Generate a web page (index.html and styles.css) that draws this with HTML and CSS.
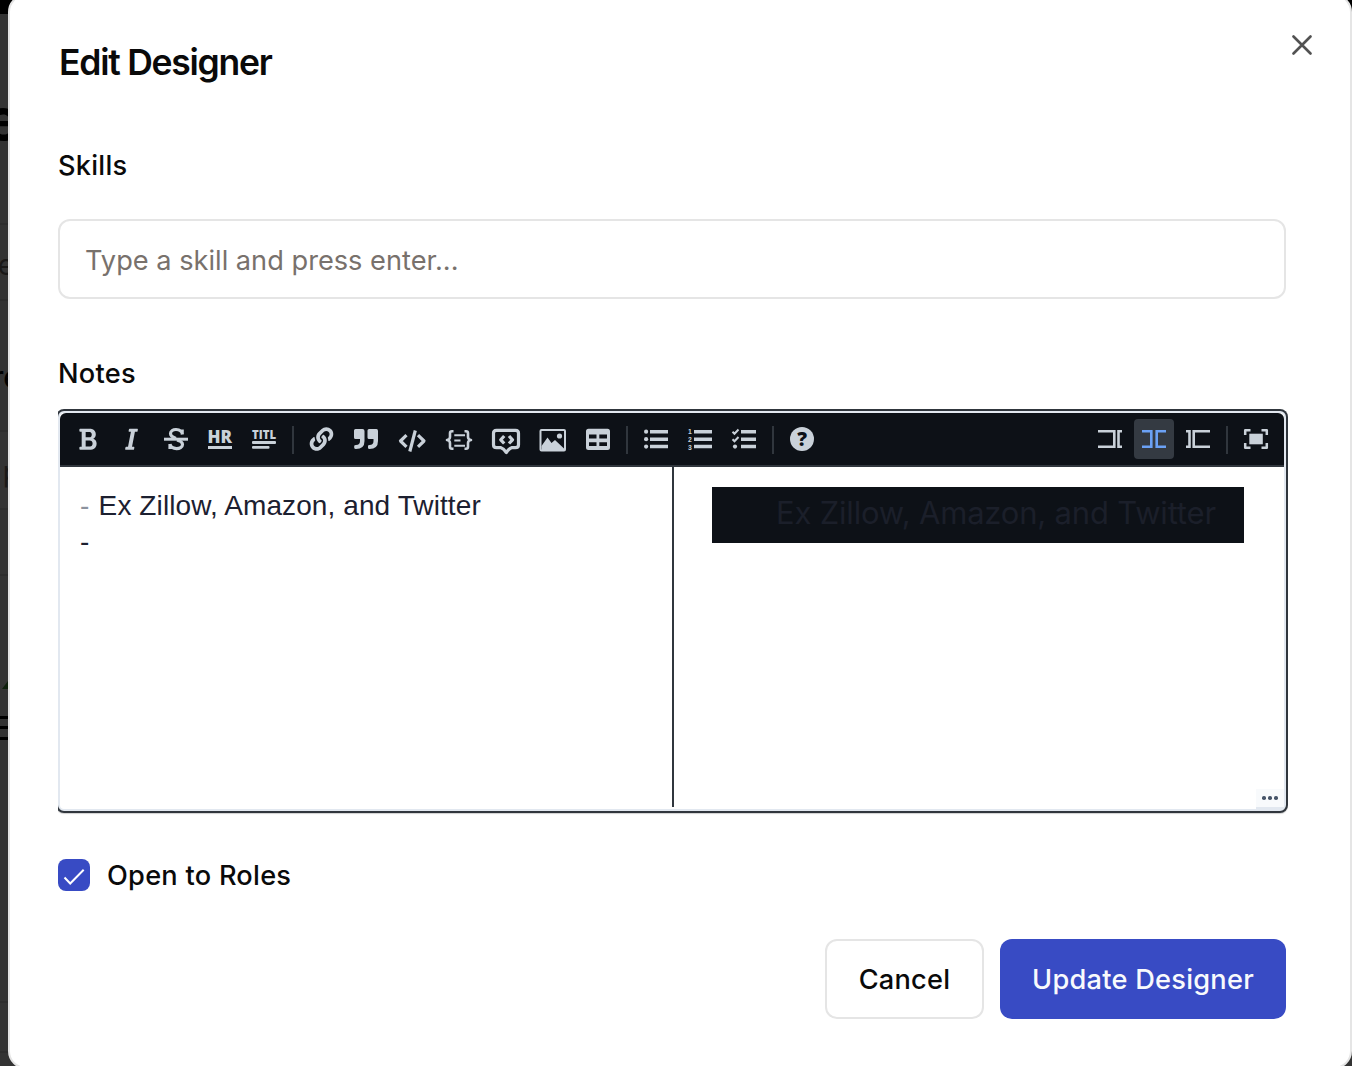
FILE: index.html
```html
<!DOCTYPE html>
<html lang="en">
<head>
<meta charset="utf-8">
<title>Edit Designer</title>
<link rel="stylesheet" href="styles.css">
</head>
<body>
<div class="page" aria-hidden="true">
  <div class="row row-nav"></div>
  <div class="row row-title"><span class="peek peek-xl">e</span></div>
  <div class="row row-a"><span class="peek peek-md">se</span></div>
  <div class="row row-b"><span class="peek peek-lg">re</span></div>
  <div class="row row-c"><span class="peek peek-sm">p</span></div>
  <div class="row row-d"></div>
  <div class="row row-e"><i class="leaf"></i><span class="peek peek-box">E</span></div>
  <div class="row row-f"></div>
  <div class="row row-g"></div>
</div>

<main class="modal">
  <header class="modal-head">
    <h1>Edit Designer</h1>
    <button class="close" aria-label="Close"><svg width="20" height="20" viewBox="0 0 20 20"><path d="M1.500 1.500l17 17M18.500 1.500l-17 17" fill="none" stroke="#525252" stroke-width="2.600" stroke-linecap="round"/></svg></button>
  </header>

  <label class="label label-skills" for="skill">Skills</label>
  <input id="skill" class="input" placeholder="Type a skill and press enter...">

  <div class="label label-notes">Notes</div>
  <section class="editor">
    <div class="toolbar">
      <div class="tools">
        <button class="tool"><svg viewBox="0 0 28 28"><g transform="translate(5 2.300) scale(.0469)"><path d="M304.793 243.891c33.639-18.537 53.657-54.16 53.657-95.693 0-48.236-26.25-87.626-68.626-104.179C265.138 34.01 240.849 32 209.661 32H24c-8.837 0-16 7.163-16 16v33.049c0 8.837 7.163 16 16 16h33.113v318.53H24c-8.837 0-16 7.163-16 16V464c0 8.837 7.163 16 16 16h195.69c24.203 0 44.834-1.289 66.866-7.584C337.52 457.193 376 410.647 376 350.014c0-52.168-26.573-91.684-71.207-106.123zM142.217 100.809h67.444c16.294 0 27.536 2.019 37.525 6.717 15.828 8.479 24.906 26.502 24.906 49.446 0 35.029-20.32 56.79-53.029 56.79h-76.846V100.809zm112.642 305.475c-10.14 4.056-22.677 4.907-31.409 4.907h-81.233V281.943h84.367c39.645 0 63.057 25.38 63.057 63.057.001 28.425-13.66 52.483-34.782 61.284z"/></g></svg></button>
        <button class="tool"><svg viewBox="0 0 28 28"><g transform="translate(6 2.300) scale(.0469)"><path d="M204.758 416h-33.849l62.092-320h40.725a16 16 0 0 0 15.704-12.937l6.242-32C297.599 41.184 290.034 32 279.968 32H120.235a16 16 0 0 0-15.704 12.937l-6.242 32C96.362 86.816 103.927 96 113.993 96h33.846l-62.09 320H46.278a16 16 0 0 0-15.704 12.935l-6.245 32C22.402 470.815 29.968 480 40.034 480h158.479a16 16 0 0 0 15.704-12.935l6.245-32c1.927-9.88-5.638-19.065-15.704-19.065z"/></g></svg></button>
        <button class="tool"><svg viewBox="0 0 28 28"><path class="s3" d="M20.500 9.500C19.500 3 8.500 3 8.500 8.600C8.500 11.500 11 12.500 14 13.500M15 15C18.500 16 20.500 17 20.500 19.500C20.500 25 8.500 25 8 19M20.200 4.500V9.500M8 19V24"/><path d="M2 12.700h24v3H2z"/></svg></button>
        <button class="tool"><svg viewBox="0 0 28 28"><text x="1.500" y="17.700" font-size="18" textLength="24.500" lengthAdjust="spacingAndGlyphs">HR</text><path d="M2 21h24v3H2z"/></svg></button>
        <button class="tool"><svg viewBox="0 0 28 28"><text x="2" y="13.700" font-size="12.500" textLength="24" lengthAdjust="spacingAndGlyphs">TITL</text><rect x="2" y="16" width="24" height="3" rx="1"/><rect x="2" y="21" width="17.500" height="2.700" rx="1"/></svg></button>
        <i class="sep"></i>
        <button class="tool"><svg viewBox="0 0 28 28"><g transform="translate(1.700 2.200) scale(.0461)"><path d="M326.612 185.391c59.747 59.809 58.927 155.698.36 214.59-.11.12-.24.25-.36.37l-67.2 67.2c-59.27 59.27-155.699 59.262-214.96 0-59.27-59.26-59.27-155.7 0-214.96l37.106-37.106c9.84-9.84 26.786-3.3 27.294 10.606.648 17.722 3.826 35.527 9.69 52.721 1.986 5.822.567 12.262-3.783 16.612l-13.087 13.087c-28.026 28.026-28.905 73.66-1.155 101.96 28.024 28.579 74.086 28.749 102.325.51l67.2-67.19c28.191-28.191 28.073-73.757 0-101.83-3.701-3.694-7.429-6.564-10.341-8.569a16.037 16.037 0 0 1-6.947-12.606c-.396-10.567 3.348-21.456 11.698-29.806l21.054-21.055c5.521-5.521 14.182-6.199 20.584-1.731a152.482 152.482 0 0 1 20.522 17.197zM467.547 44.449c-59.261-59.262-155.69-59.27-214.96 0l-67.2 67.2c-.12.12-.25.25-.36.37-58.566 58.892-59.387 154.781.36 214.59a152.454 152.454 0 0 0 20.521 17.196c6.402 4.468 15.064 3.789 20.584-1.731l21.054-21.055c8.35-8.35 12.094-19.239 11.698-29.806a16.037 16.037 0 0 0-6.947-12.606c-2.912-2.005-6.64-4.875-10.341-8.569-28.073-28.073-28.191-73.639 0-101.83l67.2-67.19c28.239-28.239 74.3-28.069 102.325.51 27.75 28.3 26.872 73.934-1.155 101.96l-13.087 13.087c-4.35 4.35-5.769 10.79-3.783 16.612 5.864 17.194 9.042 34.999 9.69 52.721.509 13.906 17.454 20.446 27.294 10.606l37.106-37.106c59.271-59.259 59.271-155.699.001-214.959z"/></g></svg></button>
        <button class="tool"><svg viewBox="0 0 28 28"><path d="M3.500 4H10.500Q12.500 4 12.500 6V16Q12.500 24 4 24Q2.200 24 2.200 22.800V21Q2.200 20 4 20Q8 20 8 16V14H3.500Q2 14 2 12.500V5.500Q2 4 3.500 4zM17 4H24.500Q26 4 26 6V16Q26 24 17.500 24Q16 24 16 22.800V21Q16 20 17.500 20Q21.500 20 21.500 16V14H17Q15.500 14 15.500 12.500V5.500Q15.500 4 17 4z"/></svg></button>
        <button class="tool wide"><svg viewBox="0 0 28 28"><path class="s3" d="M8.500 10.200L2.500 16L8.500 21.800M20 10.200L26 16L20 21.800"/><path class="s3" d="M17.300 5.500L11.800 26.500"/></svg></button>
        <button class="tool wide"><svg viewBox="0 0 28 28"><path class="s3 thin" d="M8.500 6.200H7Q5 6.200 5 8.200V12Q5 14.500 2 15Q5 15.500 5 18V21.800Q5 23.800 7 23.800H8.500M19.500 6.200H21Q23 6.200 23 8.200V12Q23 14.500 26 15Q23 15.500 23 18V21.800Q23 23.800 21 23.800H19.500"/><path class="s2" d="M9.300 10.200H20M9.300 15.500H15.500M9.300 20.700H20"/></svg></button>
        <button class="tool wide"><svg viewBox="0 0 28 28"><path class="s3" d="M4.500 5.300H23.500Q26.500 5.300 26.500 8.300V19.700Q26.500 22.700 23.500 22.700H19.500Q17 23.500 14.300 27.500Q11.500 23.500 9 22.700H4.500Q1.500 22.700 1.500 19.700V8.300Q1.500 5.300 4.500 5.300z"/><path class="s3" d="M12.200 11L8.800 14.800L12.200 18.500M17 11L20.500 14.800L17 18.500"/></svg></button>
        <button class="tool wide"><svg viewBox="0 0 28 28"><rect class="s2" x="1.500" y="5" width="24.500" height="20.500" rx="1"/><path d="M2.500 24V21L8.500 12.500L12.500 18L16 15L25 23.500V25.500H2.500z"/><circle cx="20.500" cy="11" r="2.600"/></svg></button>
        <button class="tool"><svg viewBox="0 0 28 28"><path fill-rule="evenodd" d="M4.500 3.700h19Q26 3.700 26 6.200v16.300Q26 25 23.500 25H4.500Q2 25 2 22.500V6.200Q2 3.700 4.500 3.700zM5 9.500v4h7.500v-4zM15.300 9.500v4H23v-4zM5 17.300V21h7.500v-3.700zM15.300 17.300V21H23v-3.700z"/></svg></button>
        <i class="sep"></i>
        <button class="tool"><svg viewBox="0 0 28 28"><circle cx="4.100" cy="6.700" r="2.100"/><circle cx="4.100" cy="14.200" r="2.100"/><circle cx="4.100" cy="21.600" r="2.100"/><path class="s3 flat" d="M8 6.700h18M8 14.200h18M8 21.600h18"/></svg></button>
        <button class="tool"><svg viewBox="0 0 28 28"><g class="nums"><text x="2" y="9.200">1</text><text x="2" y="16.900">2</text><text x="2" y="24.600">3</text></g><path class="s3 flat" d="M8 6.700h18M8 14.200h18M8 21.600h18"/></svg></button>
        <button class="tool"><svg viewBox="0 0 28 28"><path class="s2" d="M2.500 6.700l2 2L8.500 4.500M2.500 14.200l2 2L8.500 12"/><circle cx="5" cy="21.600" r="2.100"/><path class="s3 flat" d="M11 6.700h15M11 14.200h15M11 21.600h15"/></svg></button>
        <i class="sep"></i>
        <button class="tool"><svg viewBox="0 0 28 28"><circle cx="14" cy="14" r="12"/><text class="cut" x="9.200" y="21" font-size="19" textLength="9.800" lengthAdjust="spacingAndGlyphs">?</text></svg></button>
      </div>
      <div class="tools">
        <button class="tool"><svg viewBox="0 0 28 28"><path class="bar" d="M2 6.300H18.300V21.700H2M26 6.300H22.500V21.700H26"/></svg></button>
        <button class="tool active"><svg viewBox="0 0 28 28"><path class="bar" d="M2 6.300H11.300V21.700H2M26 6.300H16.700V21.700H26"/></svg></button>
        <button class="tool"><svg viewBox="0 0 28 28"><path class="bar" d="M2 6.300H5.500V21.700H2M26 6.300H9.700V21.700H26"/></svg></button>
        <i class="sep"></i>
        <button class="tool"><svg viewBox="0 0 28 28"><path class="s3 full" d="M3.200 10V5.200H8.500M19.500 5.200H24.800V10M24.800 18V22.800H19.500M8.500 22.800H3.200V18"/><rect x="7.300" y="8.700" width="13.500" height="10.600"/></svg></button>
      </div>
    </div>
    <div class="panes">
      <div class="source"><div><span class="mark">-</span> <span class="src">Ex Zillow, Amazon, and Twitter</span></div><div>-</div></div>
      <div class="preview"><ul><li><span class="out">Ex Zillow, Amazon, and Twitter</span></li></ul></div>
      <div class="grip"><i></i><i></i><i></i></div>
    </div>
  </section>

  <div class="check-row">
    <span class="checkbox"><svg width="32" height="32" viewBox="0 0 32 32"><path d="M6.500 18.500l5.700 6L25.700 10.700" fill="none" stroke="#fff" stroke-width="2"/></svg></span>
    <span class="label">Open to Roles</span>
  </div>

  <footer class="actions">
    <button class="btn btn-cancel"><span>Cancel</span></button>
    <button class="btn btn-primary"><span>Update Designer</span></button>
  </footer>
</main>
</body>
</html>
```
FILE: styles.css
```css
* { box-sizing: border-box; }
body {
  margin: 0;
  height: 1066px;
  overflow: hidden;
  position: relative;
  background: #333;
  color: #0a0a0a;
  font-family: Inter, "Liberation Sans", sans-serif;
}
button { border: 0; padding: 0; background: none; font: inherit; color: inherit; }

/* page behind the dialog */
.page { height: 1066px; display: flex; flex-direction: column; }
.row {
  display: flex;
  flex-direction: column;
  justify-content: center;
  align-items: flex-end;
  width: 8px;
  border-bottom: 2px solid #2d2d2d;
  overflow: hidden;
}
.row-nav { height: 14px; width: 100%; background: #000; border: 0; flex: none; }
.row-title { height: 211px; }
.row-a { height: 76px; padding-top: 5px; }
.row-b { height: 131px; padding-top: 22px; }
.row-c { height: 78px; padding-top: 4px; }
.row-d { height: 66px; }
.row-e { height: 427px; justify-content: flex-start; padding-top: 105px; }
.row-f { height: 50px; }
.row-g { flex: 1; border: 0; }
.peek { color: #000; line-height: 1; white-space: nowrap; }
.peek-xl { font-size: 58px; font-weight: 700; margin-right: -12px; }
.peek-md { font-size: 28px; color: #191817; margin-right: -6px; }
.peek-lg { font-size: 30px; font-weight: 500; margin-right: -13px; }
.peek-sm { font-size: 28px; color: #191817; margin-right: -12px; }
.peek-box { font-size: 32px; font-weight: 500; margin: 24px -4px 0 0; }
.leaf { width: 6px; height: 8px; background: #0d1f0b; clip-path: polygon(100% 0, 100% 100%, 0 100%); }

/* dialog */
.modal {
  position: absolute;
  left: 8px;
  top: -6px;
  width: 1344px;
  height: 1075px;
  padding: 39px 64px 0 48px;
  background: #fff;
  border: 2px solid #e5e5e5;
  border-radius: 18px;
}
.modal-head { display: flex; justify-content: space-between; height: 114px; }
h1 {
  margin: 0 0 0 1px;
  font-size: 35.500px;
  line-height: 56px;
  font-weight: 600;
  letter-spacing: -1.250px;
}
.close { display: flex; width: 20px; height: 20px; margin: 0 -26px 0 0; }
.label {
  display: block;
  font-size: 27.200px;
  line-height: 34px;
  font-weight: 500;
  letter-spacing: .25px;
}
.input {
  display: block;
  width: 1228px;
  height: 80px;
  margin-top: 36px;
  padding: 2px 25px 0;
  border: 2px solid #e5e5e5;
  border-radius: 12px;
  background: #fff;
  font: 400 27.200px Inter, sans-serif;
}
.input::placeholder { color: #78716c; opacity: 1; }
.label-notes { margin-top: 58px; }

/* markdown editor */
.editor {
  width: 1228px;
  height: 400px;
  margin-top: 20px;
  border: 2px solid #e2e8f0;
  border-radius: 6px;
  box-shadow: 0 0 0 2px #30363d, 0 1px 1px 2px #00000030;
  clip-path: inset(-2px -2px -4px 0);
  background: #fff;
}
.toolbar {
  display: flex;
  justify-content: space-between;
  height: 54px;
  padding: 0 6px;
  background: #0d1117;
  border-bottom: 2px solid #30363d;
  border-radius: 6px 6px 0 0;
}
.tools { display: flex; align-items: center; }
.tool {
  display: flex;
  align-items: center;
  justify-content: center;
  width: 40px;
  height: 40px;
  margin: 0 2px;
  border-radius: 4px;
  color: #c9d1d9;
}
.tool.wide { width: 43px; }
.tool.active { background: #343a42; color: #6ba1f5; }
.tool svg { width: 28px; height: 28px; fill: currentColor; overflow: visible; }
.tool svg text { font-family: "Open Sans", sans-serif; font-weight: 800; }
.tool svg .nums text { font-family: "Liberation Sans", sans-serif; font-weight: 700; font-size: 6.800px; }
.tool svg .cut { fill: #0d1117; }
.tool svg .s2, .tool svg .s3, .tool svg .bar { fill: none; stroke: currentColor; }
.tool svg .s2 { stroke-width: 2; }
.tool svg .s3 { stroke-width: 3.200; stroke-linejoin: round; }
.tool svg .thin { stroke-width: 2.600; }
.tool svg .full { stroke-width: 2.500; }
.tool svg .flat { stroke-width: 3.500; }
.tool svg .bar { stroke-width: 2.600; }
.sep { width: 2px; height: 28px; margin: 2px 6px 0; background: #30363d; }
.panes { position: relative; display: flex; height: 340px; }
.source {
  width: 614px;
  padding: 21px 20px;
  border-right: 2px solid #30363d;
  font: 28px/36px "Liberation Sans", Arial, sans-serif;
  color: #1c2030;
}
.mark { color: #8b929e; }
.src { margin-left: 1.500px; letter-spacing: .1px; }
.preview { flex: 1; padding: 20px 40px 0 38px; }
ul { margin: 0; padding: 0 0 0 64px; height: 56px; list-style: none; background: #0d1117; }
li { color: #1b1f2a; font-size: 31px; line-height: 51px; letter-spacing: -.190px; white-space: nowrap; }
.grip {
  position: absolute;
  right: 0;
  bottom: 0;
  display: flex;
  align-items: center;
  justify-content: center;
  gap: 2.500px;
  width: 28px;
  height: 18px;
  background: #f8fafc;
  box-shadow: 0 2px 0 #e2e8f0;
}
.grip i { width: 3.500px; height: 3.500px; border-radius: 50%; background: #475569; }

.check-row { display: flex; align-items: center; gap: 17px; margin-top: 47px; height: 34px; }
.check-row .label { padding-top: 1px; }
.checkbox { width: 32px; height: 32px; border-radius: 8px; background: #384bc4; }
.actions { display: flex; justify-content: flex-end; gap: 16px; width: 1228px; margin-top: 47px; }
.btn {
  height: 80px;
  padding-top: 1px;
  border-radius: 12px;
  font-size: 27.200px;
  font-weight: 500;
  letter-spacing: .25px;
}
.btn-cancel { width: 159px; border: 2px solid #e5e5e5; }
.btn-primary { width: 286px; background: #384bc4; color: #f8fafc; }
```
